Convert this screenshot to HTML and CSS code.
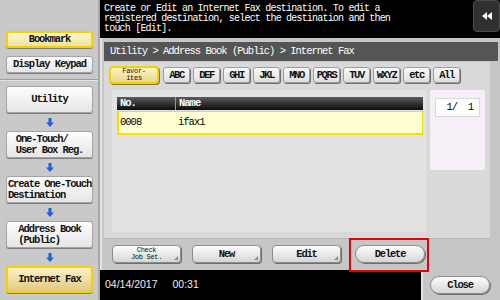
FILE: index.html
```html
<!DOCTYPE html>
<html lang="en">
<head>
  <meta charset="UTF-8" />
  <title>Internet Fax</title>
  <link rel="stylesheet" href="styles.css">
</head>
<body>
  <div class="screen">
    <div class="side">
      <div class="side-top">
        <button class="sbtn yellow">Bookmark</button>
        <button class="sbtn">Display Keypad</button>
      </div>
      <div class="flow">
        <button class="sbtn tall"><span>Utility</span></button>
        <div class="arrow"><svg width="8" height="9" viewBox="0 0 8 9"><path d="M2.5 0h3v4.5H8L4 9 0 4.5h2.5z" fill="#1f5fe6"/></svg></div>
        <button class="sbtn tall"><span>One-Touch/<br>User Box Reg.</span></button>
        <div class="arrow"><svg width="8" height="9" viewBox="0 0 8 9"><path d="M2.5 0h3v4.5H8L4 9 0 4.5h2.5z" fill="#1f5fe6"/></svg></div>
        <button class="sbtn tall"><span>Create One-Touch<br>Destination</span></button>
        <div class="arrow"><svg width="8" height="9" viewBox="0 0 8 9"><path d="M2.5 0h3v4.5H8L4 9 0 4.5h2.5z" fill="#1f5fe6"/></svg></div>
        <button class="sbtn tall"><span>Address Book<br>(Public)</span></button>
        <div class="arrow"><svg width="8" height="9" viewBox="0 0 8 9"><path d="M2.5 0h3v4.5H8L4 9 0 4.5h2.5z" fill="#1f5fe6"/></svg></div>
        <button class="sbtn tall current"><span>Internet Fax</span></button>
      </div>
    </div>

    <div class="main">
      <div class="msg">
        <p>Create or Edit an Internet Fax destination. To edit a
registered destination, select the destination and then
touch [Edit].</p>
        <button class="back">
          <svg width="10" height="8" viewBox="0 0 10 8"><path d="M0 4l5-4v8zM5 4l5-4v8z" fill="#fff"/></svg>
        </button>
      </div>

      <div class="panel">
        <div class="crumb">Utility &gt; Address Book (Public) &gt; Internet Fax</div>
        <div class="content">
          <div class="tabs">
            <button class="tab fav">Favor-<br>ites</button>
            <button class="tab">ABC</button>
            <button class="tab">DEF</button>
            <button class="tab">GHI</button>
            <button class="tab">JKL</button>
            <button class="tab">MNO</button>
            <button class="tab">PQRS</button>
            <button class="tab">TUV</button>
            <button class="tab">WXYZ</button>
            <button class="tab">etc</button>
            <button class="tab">All</button>
          </div>
          <div class="list-area">
            <div class="list">
              <div class="list-head">
                <span class="col-no">No.</span>
                <span class="col-name">Name</span>
              </div>
              <div class="list-row">
                <span class="col-no">0008</span>
                <span class="col-name">ifax1</span>
              </div>
            </div>
            <div class="pager">
              <div class="count">1/&nbsp;&nbsp;1</div>
            </div>
          </div>
        </div>
        <div class="actions">
          <button class="abtn corner small">Check<br>Job Set.</button>
          <button class="abtn corner">New</button>
          <button class="abtn corner">Edit</button>
          <button class="abtn pill delete">Delete</button>
        </div>
      </div>

      <div class="bottom">
        <div class="footer">
          <span>04/14/2017</span>
          <span class="time">00:31</span>
        </div>
        <div class="closebar">
          <button class="abtn pill close">Close</button>
        </div>
      </div>
    </div>
  </div>
  <div class="highlight"></div>
</body>
</html>
```

FILE: styles.css
```css
body {
  margin: 0;
  width: 500px;
  height: 300px;
  background: #000;
  overflow: hidden;
  font-family: "Liberation Mono", monospace;
  position: relative;
}
button {
  font-family: "Liberation Mono", monospace;
  color: #111;
  padding: 0;
  cursor: pointer;
}
.screen {
  display: flex;
  height: 300px;
}

/* left column */
.side {
  width: 100px;
  box-sizing: border-box;
  background: #c9c9c9;
  border-right: 2px solid #a8a8a8;
}
.side-top {
  display: flex;
  flex-direction: column;
  gap: 8px;
  padding: 31px 0 6px 6px;
  border-bottom: 1px solid #9e9e9e;
  box-shadow: 0 1px 0 #e2e2e2;
}
.flow {
  display: flex;
  flex-direction: column;
  padding: 6px 0 0 6px;
}
.sbtn {
  width: 87px;
  height: 17px;
  box-sizing: border-box;
  background: linear-gradient(#fdfdfd, #e6e6e6);
  border: 1px solid #a4a4a4;
  border-radius: 3px;
  box-shadow: 0 1px 0 #7d7d7d;
  font-size: 10.5px;
  font-weight: 600;
  letter-spacing: -1.1px;
  line-height: 11px;
  display: flex;
  align-items: center;
  justify-content: center;
}
.sbtn.tall {
  height: 27px;
}
.sbtn span {
  text-align: left;
}
.sbtn.yellow {
  background: linear-gradient(#fff8cf, #efe2a0);
  border: 2px solid #f2d200;
}
.sbtn.current {
  background: linear-gradient(#fbf1c6, #e3c97f);
  border: 2px solid #f2d200;
}
.arrow {
  height: 18px;
  width: 87px;
  display: flex;
  align-items: center;
  justify-content: center;
}

/* right column */
.main {
  width: 400px;
  display: flex;
  flex-direction: column;
}
.msg {
  height: 38px;
  display: flex;
  padding-left: 4px;
}
.msg p {
  margin: 0;
  padding-top: 4px;
  color: #fff;
  font-size: 10px;
  line-height: 10px;
  letter-spacing: -0.8px;
  white-space: pre;
}
.back {
  margin-left: auto;
  width: 27px;
  height: 32px;
  background: #303030;
  border: 1px solid #4c4c4c;
  border-radius: 4px;
  display: flex;
  align-items: center;
  justify-content: center;
}

.panel {
  height: 232px;
  box-sizing: border-box;
  background: #c6c6c6;
  border-left: 2px solid #e4e4e4;
  padding: 4px 2px 0 2px;
}
.crumb {
  height: 19px;
  background: #555;
  color: #fff;
  font-size: 10.5px;
  line-height: 19px;
  letter-spacing: -1px;
  padding-left: 6px;
}
.content {
  height: 176px;
  margin: 1px 8px 0 0;
  background: #d9d9d9;
  border-bottom: 1px solid #b4b4b4;
}
.tabs {
  display: flex;
  gap: 3px;
  padding: 5px 0 0 6px;
}
.tab {
  width: 27px;
  height: 16px;
  box-sizing: border-box;
  background: linear-gradient(#fafafa, #dedede);
  border: 1px solid #9c9c9c;
  border-radius: 3px;
  box-shadow: 1px 1px 0 #6f6f6f;
  font-size: 10.5px;
  font-weight: bold;
  letter-spacing: -1.4px;
  line-height: 14px;
}
.tab.fav {
  width: 48px;
  margin-right: 2px;
  background: linear-gradient(#fdf5c8, #e9d58e);
  border: 1px solid #f2d200;
  box-shadow: 0 0 0 1px #f2d200, 1px 1px 0 1px #8a7a30;
  font-size: 7px;
  font-weight: normal;
  line-height: 7px;
  letter-spacing: -0.3px;
}
.list-area {
  display: flex;
  gap: 4px;
  padding: 7px 0 0 8px;
}
.list {
  width: 314px;
  height: 142px;
  box-sizing: border-box;
  background: #e2e2e2;
  padding: 7px 3px 0 5px;
}
.list-head {
  height: 13px;
  display: flex;
  background: linear-gradient(#5c5c5c, #0c0c0c);
  color: #fff;
  font-size: 10.5px;
  font-weight: 600;
  line-height: 13px;
  letter-spacing: -1px;
}
.col-no {
  width: 55px;
  padding-left: 3px;
}
.col-name {
  padding-left: 3px;
}
.list-head .col-name {
  border-left: 1px solid #9a9a9a;
}
.list-row {
  height: 24px;
  box-sizing: border-box;
  margin-top: 1px;
  display: flex;
  background: #ffffd2;
  border: 1px solid #f4e100;
  border-width: 1px 1px 2px 2px;
  font-size: 10.5px;
  line-height: 21px;
  letter-spacing: -1px;
}
.list-row .col-no {
  width: 54px;
  padding-left: 1px;
}
.list-row .col-name {
  padding-left: 4px;
}
.pager {
  width: 55px;
  height: 80px;
  box-sizing: border-box;
  background: #f7eff7;
  border-radius: 2px;
  padding: 8px 0 0 5px;
}
.count {
  width: 45px;
  height: 19px;
  box-sizing: border-box;
  background: #fff;
  border: 1px solid #d8d8d8;
  font-size: 10.5px;
  line-height: 17px;
  text-align: right;
  padding-right: 6px;
  letter-spacing: -1px;
}

.actions {
  display: flex;
  gap: 11px;
  padding: 6px 0 0 8px;
}
.abtn {
  width: 69px;
  height: 18px;
  box-sizing: border-box;
  background: linear-gradient(#fdfdfd, #d6d6d6);
  border: 1px solid #8c8c8c;
  border-radius: 4px;
  box-shadow: 1px 1px 0 #6e6e6e;
  font-size: 10.5px;
  font-weight: bold;
  letter-spacing: -1.2px;
  line-height: 10px;
  position: relative;
}
.abtn.small {
  font-size: 7px;
  line-height: 7px;
  font-weight: normal;
  letter-spacing: -0.3px;
}
.abtn.corner::after {
  content: "";
  position: absolute;
  right: 2px;
  bottom: 2px;
  border-style: solid;
  border-width: 0 0 4px 4px;
  border-color: transparent transparent #8a8a8a transparent;
}
.abtn.pill {
  border-radius: 9px;
  width: 70px;
}
.abtn.delete {
  margin-left: 3px;
}

.bottom {
  height: 30px;
  display: flex;
}
.footer {
  flex: 1;
  color: #eee;
  font-family: "Liberation Sans", Arial, sans-serif;
  font-size: 10.5px;
  padding: 8px 0 0 5px;
}
.footer .time {
  margin-left: 12px;
}
.closebar {
  width: 79px;
  box-sizing: border-box;
  background: #c6c6c6;
  border-left: 2px solid #e4e4e4;
  padding: 5px 0 0 7px;
}
.abtn.close {
  width: 60px;
}

/* annotation frame around Delete */
.highlight {
  position: absolute;
  left: 349px;
  top: 238px;
  width: 80px;
  height: 34px;
  box-sizing: border-box;
  border: 2px solid #e5000c;
}
```
